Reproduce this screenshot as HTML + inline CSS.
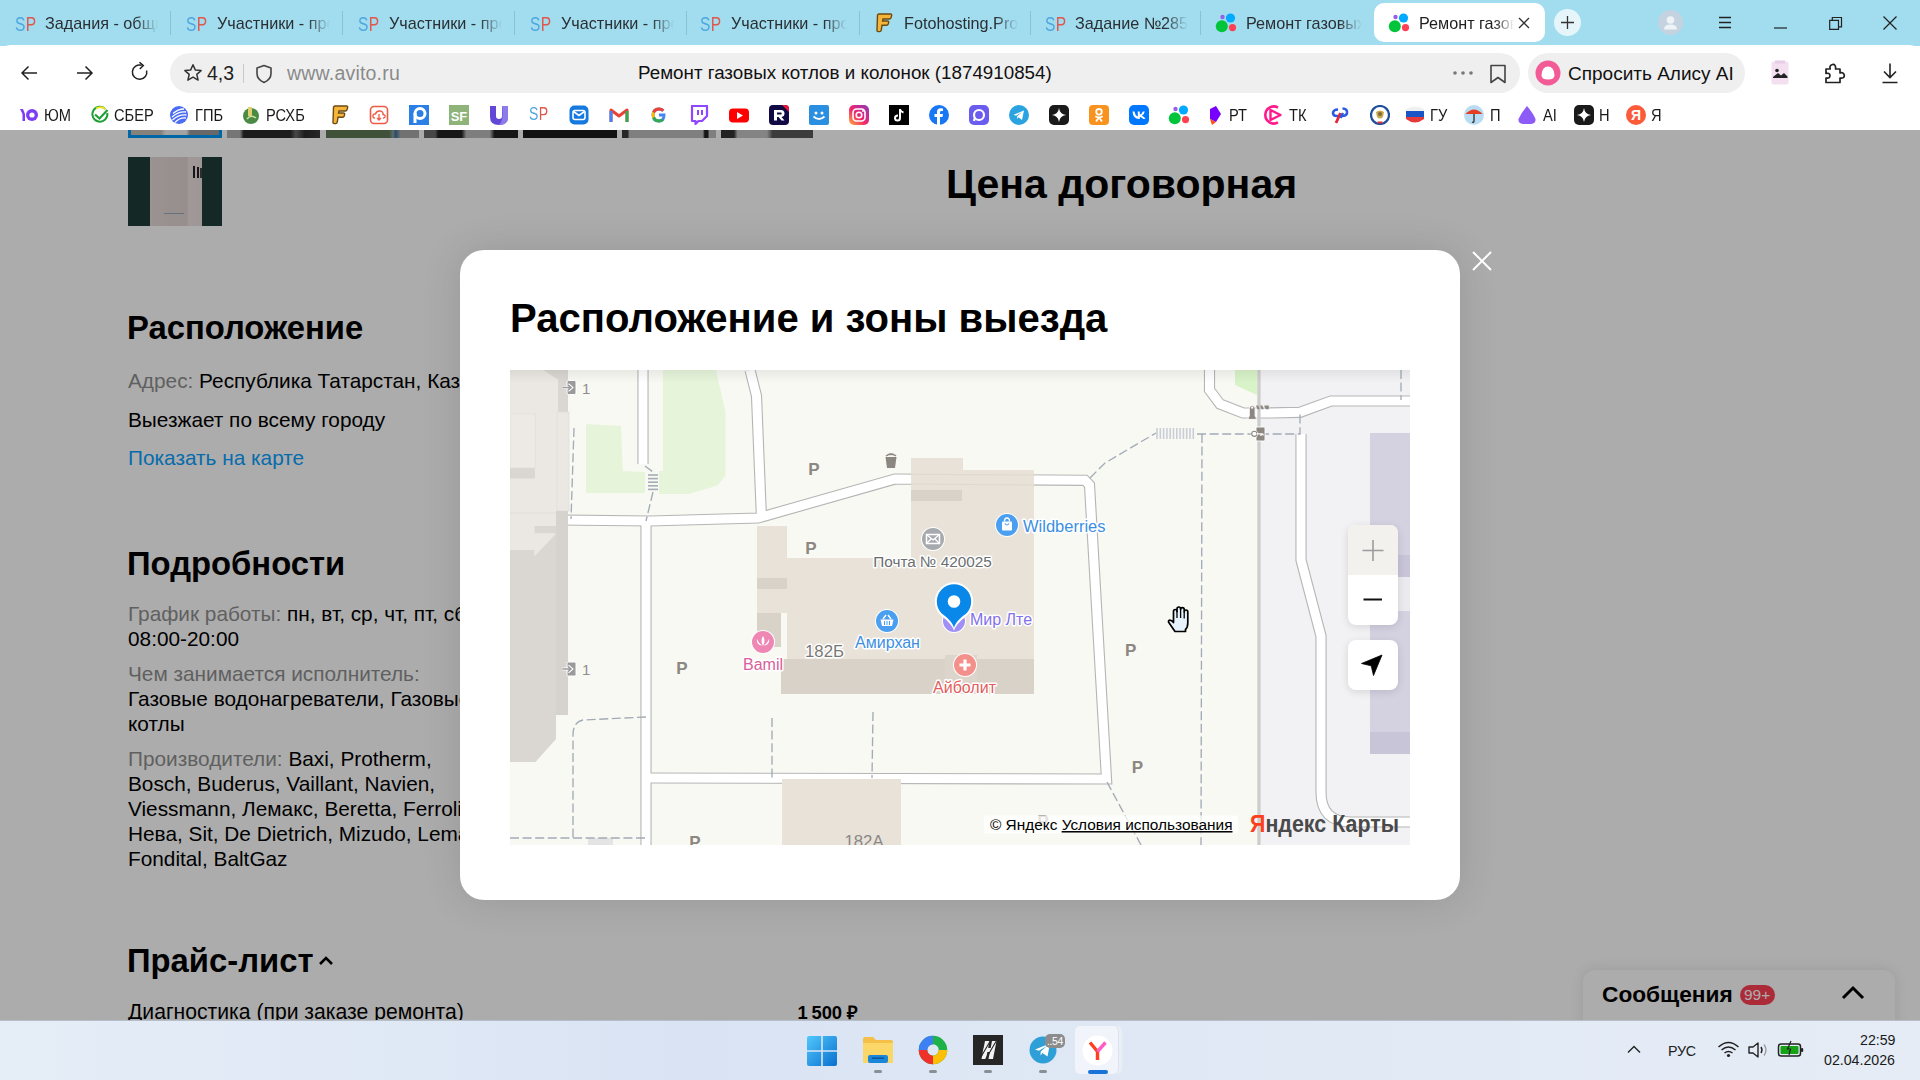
<!DOCTYPE html>
<html><head><meta charset="utf-8">
<style>
*{box-sizing:border-box}
html,body{margin:0;padding:0}
body{width:1920px;height:1080px;overflow:hidden;position:relative;font-family:"Liberation Sans",sans-serif;background:#fff;color:#000}
.a{position:absolute}
.t{position:absolute;white-space:nowrap;line-height:1}
/* tabs */
#tabs{left:0;top:0;width:1920px;height:46px;background:#a1ddef}
.sp{position:absolute;top:12.9px;font-size:21px;letter-spacing:0.5px;line-height:1;transform:scaleX(0.74);transform-origin:0 0}
.sp b{font-weight:400;color:#4fa6e0}
.sp i{font-style:normal;color:#e2564b}
.tx{position:absolute;top:15px;font-size:16.2px;color:#2b2f33;white-space:nowrap;overflow:hidden;line-height:1.1;
 -webkit-mask-image:linear-gradient(90deg,#000 80%,transparent 100%)}
.sep{position:absolute;top:11px;width:1px;height:24px;background:#86c3d6}
#toolbar{left:0;top:45px;width:1920px;height:56px;background:#fff;border-radius:10px 10px 0 0}
#bm{left:0;top:100px;width:1920px;height:30px;background:#fff}
#page{left:0;top:130px;width:1920px;height:890px;background:#fff;overflow:hidden}
#overlay{left:0;top:0;width:1920px;height:890px;background:rgba(0,0,0,0.325)}
#taskbar{left:0;top:1020px;width:1920px;height:60px;background:linear-gradient(90deg,#e5edf7 0%,#dfe8f5 22%,#d9e3f4 36%,#dee7f4 52%,#e2eaf5 75%,#e5ecf6 100%)}
</style></head>
<body>
<!-- TAB STRIP -->
<div id="tabs" class="a">
<div class="sp a" style="left:15px"><b>S</b><i>P</i></div>
<div class="tx" style="left:45px;width:113px">Задания - общие</div>
<div class="sep" style="left:170px"></div>
<div class="sp a" style="left:186px"><b>S</b><i>P</i></div>
<div class="tx" style="left:217px;width:113px">Участники - просмотр</div>
<div class="sep" style="left:342px"></div>
<div class="sp a" style="left:358px"><b>S</b><i>P</i></div>
<div class="tx" style="left:389px;width:113px">Участники - просмотр</div>
<div class="sep" style="left:514px"></div>
<div class="sp a" style="left:530px"><b>S</b><i>P</i></div>
<div class="tx" style="left:561px;width:113px">Участники - просмотр</div>
<div class="sep" style="left:686px"></div>
<div class="sp a" style="left:700px"><b>S</b><i>P</i></div>
<div class="tx" style="left:731px;width:116px">Участники - просмотр</div>
<div class="sep" style="left:859px"></div>
<svg class="a" style="left:875px;top:13px" width="18" height="20" viewBox="0 0 18 20"><path d="M2.5 2.5 Q2.5 1 4 1 L15.5 1 Q17 1 16.6 2.6 L16 4.8 Q15.6 6 14.4 6 L8 6 L7.6 8 L12.5 8 Q14 8 13.6 9.5 L13.2 11 Q12.8 12.3 11.6 12.3 L7 12.3 L6.3 16.8 Q6 18.6 4.5 18.6 L3.2 18.6 Q1.8 18.6 2 17 Z" fill="#f6b53a" stroke="#6b4a12" stroke-width="1.4"/></svg>
<div class="tx" style="left:904px;width:114px">Fotohosting.Pro</div>
<div class="sep" style="left:1030px"></div>
<div class="sp a" style="left:1045px"><b>S</b><i>P</i></div>
<div class="tx" style="left:1075px;width:113px">Задание №2857</div>
<div class="sep" style="left:1200px"></div>
<svg class="a" style="left:1215px;top:12px" width="24" height="22" viewBox="0 0 24 22"><circle cx="7.5" cy="5" r="2.2" fill="#965eeb"/><circle cx="15.5" cy="6" r="4.6" fill="#0af"/><circle cx="6.8" cy="14.3" r="6" fill="#00c53a"/><circle cx="17.5" cy="15.6" r="3.6" fill="#ff4053"/></svg>
<div class="tx" style="left:1246px;width:116px">Ремонт газовых котлов</div>
<div class="a" style="left:1374px;top:3px;width:171px;height:39px;background:#fff;border-radius:10px"></div>
<svg class="a" style="left:1388px;top:12px" width="24" height="22" viewBox="0 0 24 22"><circle cx="7.5" cy="5" r="2.2" fill="#965eeb"/><circle cx="15.5" cy="6" r="4.6" fill="#0af"/><circle cx="6.8" cy="14.3" r="6" fill="#00c53a"/><circle cx="17.5" cy="15.6" r="3.6" fill="#ff4053"/></svg>
<div class="tx" style="left:1419px;width:95px;color:#1f1f1f">Ремонт газовых</div>
<svg class="a" style="left:1517px;top:16px" width="14" height="14" viewBox="0 0 14 14"><path d="M2 2L12 12M12 2L2 12" stroke="#333" stroke-width="1.3"/></svg>
<div class="a" style="left:1554px;top:9px;width:27px;height:27px;border-radius:50%;background:#e6f5fa"></div>
<svg class="a" style="left:1559px;top:14px" width="17" height="17" viewBox="0 0 17 17"><path d="M8.5 2V15M2 8.5H15" stroke="#333" stroke-width="1.3"/></svg>
<div class="a" style="left:1658px;top:10px;width:25px;height:25px;border-radius:50%;background:#c4d3df"></div>
<svg class="a" style="left:1658px;top:10px" width="25" height="25" viewBox="0 0 25 25"><circle cx="12.5" cy="10" r="3.8" fill="#eef3f7"/><path d="M6 19.5Q6 14.5 12.5 14.5Q19 14.5 19 19.5Z" fill="#eef3f7"/></svg>
<svg class="a" style="left:1716px;top:14px" width="18" height="18" viewBox="0 0 18 18"><path d="M3 3.5H15M3 8.5H15M3 13.5H15" stroke="#222" stroke-width="1.3"/></svg>
<svg class="a" style="left:1772px;top:18px" width="18" height="14" viewBox="0 0 18 14"><path d="M2 10H15" stroke="#222" stroke-width="1.2"/></svg>
<svg class="a" style="left:1827px;top:14px" width="18" height="18" viewBox="0 0 18 18"><path d="M2.7 6.3H11.5V15.3H2.7Z M5.3 6.3V3.5H14.5V12.8H11.5" fill="none" stroke="#222" stroke-width="1.2"/></svg>
<svg class="a" style="left:1881px;top:14px" width="18" height="18" viewBox="0 0 18 18"><path d="M2.5 2.5L15.5 15.5M15.5 2.5L2.5 15.5" stroke="#222" stroke-width="1.25"/></svg>
</div>
<!-- TOOLBAR -->
<div id="toolbar" class="a">

<svg class="a" style="left:19px;top:18px" width="20" height="20" viewBox="0 0 20 20"><path d="M18 10H3M9.5 3.5L3 10L9.5 16.5" fill="none" stroke="#222" stroke-width="1.5"/></svg>
<svg class="a" style="left:75px;top:18px" width="20" height="20" viewBox="0 0 20 20"><path d="M2 10H17M10.5 3.5L17 10L10.5 16.5" fill="none" stroke="#222" stroke-width="1.5"/></svg>
<svg class="a" style="left:129px;top:16px" width="22" height="22" viewBox="0 0 22 22"><path d="M17.6 9.5A7.2 7.2 0 1 1 12.6 4.2" fill="none" stroke="#222" stroke-width="1.5"/><path d="M10.5 1.2L14.3 4.6L10.8 8" fill="none" stroke="#222" stroke-width="1.5"/></svg>
<div class="a" style="left:170px;top:8px;width:1350px;height:40px;border-radius:20px;background:#efefef"></div>
<svg class="a" style="left:183px;top:18px" width="20" height="20" viewBox="0 0 20 20"><path d="M10 1.8L12.4 7.1L18.1 7.6L13.8 11.4L15.1 17.1L10 14.1L4.9 17.1L6.2 11.4L1.9 7.6L7.6 7.1Z" fill="none" stroke="#333" stroke-width="1.5" stroke-linejoin="round"/></svg>
<div class="t" style="left:207px;top:19px;font-size:19.5px;color:#1f1f1f">4,3</div>
<div class="a" style="left:243px;top:19px;width:1px;height:19px;background:#c9c9c9"></div>
<svg class="a" style="left:254px;top:19px" width="20" height="20" viewBox="0 0 20 20"><path d="M10 1.5L17 4V9.5Q17 15.5 10 18.5Q3 15.5 3 9.5V4Z" fill="none" stroke="#444" stroke-width="1.6" stroke-linejoin="round"/></svg>
<div class="t" style="left:287px;top:19px;font-size:19.5px;color:#8a8a8a;letter-spacing:0.2px">www.avito.ru</div>
<div class="t" style="left:638px;top:19px;font-size:18.8px;color:#111">Ремонт газовых котлов и колонок (1874910854)</div>
<svg class="a" style="left:1452px;top:23px" width="22" height="10" viewBox="0 0 22 10"><circle cx="3" cy="5" r="1.8" fill="#777"/><circle cx="11" cy="5" r="1.8" fill="#777"/><circle cx="19" cy="5" r="1.8" fill="#777"/></svg>
<svg class="a" style="left:1488px;top:18px" width="20" height="22" viewBox="0 0 20 22"><path d="M3 2.5H17V19.5L10 14.5L3 19.5Z" fill="none" stroke="#444" stroke-width="1.6" stroke-linejoin="round"/></svg>
<div class="a" style="left:1528px;top:8px;width:217px;height:40px;border-radius:20px;background:#efefef"></div>
<svg class="a" style="left:1535px;top:15px" width="26" height="26" viewBox="0 0 26 26"><circle cx="13" cy="13" r="12.5" fill="#f25b96"/><path d="M13 6.5Q7 6.5 6.5 15Q6.5 19.5 13 19.5Q19.5 19.5 19.5 15Q19 6.5 13 6.5Z" fill="#fff"/></svg>
<div class="t" style="left:1568px;top:19px;font-size:19px;color:#111">Спросить Алису AI</div>
<svg class="a" style="left:1770px;top:15px" width="20" height="26" viewBox="0 0 20 26"><rect x="1.5" y="1.5" width="17" height="23" rx="2" fill="#f3dff0"/><rect x="5" y="0.5" width="10" height="3" fill="#e8cde6"/><circle cx="7" cy="10.5" r="1.8" fill="#222"/><path d="M3 17L8 13L11 15.5L14 13L17.5 16.5V18H3Z" fill="#222"/></svg>
<svg class="a" style="left:1822px;top:16px" width="26" height="24" viewBox="0 0 26 24"><path d="M4 8H8.2Q7 4.5 10.5 3.5Q14 3 13.6 8H18V12Q21.5 10.8 22.3 14.2Q22.5 17.7 18 17V21.5H4V17Q8 17.8 8 14.6Q7.6 11.5 4 12.5Z" fill="none" stroke="#222" stroke-width="1.7" stroke-linejoin="round"/></svg>
<svg class="a" style="left:1880px;top:17px" width="20" height="22" viewBox="0 0 20 22"><path d="M10 1.5V15.5M4 9.5L10 15.5L16 9.5M2.5 20.5H17.5" fill="none" stroke="#222" stroke-width="1.6"/></svg>
</div>
<!-- BOOKMARKS -->
<div id="bm" class="a">
<svg class="a" style="left:18px;top:5px" width="20" height="20" viewBox="0 0 20 20"><path d="M2 4L5 4L7 9L7 16L4.5 16L4.5 9Z" fill="#7d3cf5"/><circle cx="14" cy="10" r="6" fill="#7d3cf5"/><circle cx="14" cy="10" r="2.6" fill="#fff"/></svg>
<div class="t" style="left:44px;top:7.2px;font-size:16.3px;color:#1a1a1a;transform:scaleX(0.9);transform-origin:0 0">ЮМ</div>
<svg class="a" style="left:90px;top:5px" width="20" height="20" viewBox="0 0 20 20"><path d="M15.5 4.2A7.5 7.5 0 1 0 17.3 8" fill="none" stroke="#21a038" stroke-width="2"/><path d="M15.5 4.2A7.5 7.5 0 0 0 6 3.6" fill="none" stroke="#f2e51f" stroke-width="2"/><path d="M5 9.5L9.5 13.5L17.5 5" fill="none" stroke="#21a038" stroke-width="2.2"/></svg>
<div class="t" style="left:114px;top:7.2px;font-size:16.3px;color:#1a1a1a;transform:scaleX(0.9);transform-origin:0 0">СБЕР</div>
<svg class="a" style="left:169px;top:5px" width="20" height="20" viewBox="0 0 20 20"><circle cx="10" cy="10" r="9" fill="#4a6cf0"/><path d="M3 12Q10 6 17 7M3.5 15Q10 9 17.5 10M6 17.5Q11 12 17 13M4 8.5Q9 4 15 4" stroke="#fff" stroke-width="1.3" fill="none"/></svg>
<div class="t" style="left:195px;top:7.2px;font-size:16.3px;color:#1a1a1a;transform:scaleX(0.9);transform-origin:0 0">ГПБ</div>
<svg class="a" style="left:242px;top:5px" width="18" height="20" viewBox="0 0 18 20"><circle cx="9" cy="11" r="8" fill="#4a8a45"/><path d="M5 14Q9 9 14 13" stroke="#cde2a0" stroke-width="1.5" fill="none"/><rect x="6" y="2" width="4" height="9" fill="#e0d070"/></svg>
<div class="t" style="left:266px;top:7.2px;font-size:16.3px;color:#1a1a1a;transform:scaleX(0.9);transform-origin:0 0">РСХБ</div>
<svg class="a" style="left:331px;top:5px" width="18" height="20" viewBox="0 0 18 20"><path d="M2.5 2.5 Q2.5 1 4 1 L15.5 1 Q17 1 16.6 2.6 L16 4.8 Q15.6 6 14.4 6 L8 6 L7.6 8 L12.5 8 Q14 8 13.6 9.5 L13.2 11 Q12.8 12.3 11.6 12.3 L7 12.3 L6.3 16.8 Q6 18.6 4.5 18.6 L3.2 18.6 Q1.8 18.6 2 17 Z" fill="#f6b53a" stroke="#6b4a12" stroke-width="1.4"/></svg>
<svg class="a" style="left:369px;top:5px" width="20" height="20" viewBox="0 0 20 20"><rect x="1.5" y="1.5" width="17" height="17" rx="3.5" fill="#fff" stroke="#ee5a45" stroke-width="1.6"/><path d="M6 13Q3.5 13 4 10.5Q4.5 8.5 6.5 9Q7.5 5.5 11 6Q14.5 6.5 14 9.5Q16.5 10 16 12Q15.5 13 14 13" fill="none" stroke="#ee5a45" stroke-width="1.4"/><path d="M10 9V15M8 13L10 15L12 13" fill="none" stroke="#ee5a45" stroke-width="1.3"/></svg>
<svg class="a" style="left:409px;top:5px" width="20" height="20" viewBox="0 0 20 20"><rect x="0" y="0" width="20" height="20" fill="#2c80e5"/><circle cx="11" cy="8.5" r="5" fill="none" stroke="#fff" stroke-width="3"/><rect x="4.5" y="8" width="3" height="10" fill="#fff"/></svg>
<svg class="a" style="left:449px;top:5px" width="20" height="20" viewBox="0 0 20 20"><rect x="0" y="0" width="20" height="20" fill="#8fb47a"/><text x="10" y="15.5" font-size="13" font-weight="700" text-anchor="middle" fill="#fff" font-family="Liberation Sans">SF</text></svg>
<svg class="a" style="left:489px;top:5px" width="20" height="20" viewBox="0 0 20 20"><path d="M1 1H7V11Q7 14 10 14Q13 14 13 11V1H19V12Q19 20 10 20Q1 20 1 12Z" fill="#6348d8"/><path d="M13 1H19V12Q19 20 10 20Q15 16 13 1Z" fill="#8d7bea"/></svg>
<div class="sp a" style="left:529px;top:4px;font-size:19px"><b>S</b><i>P</i></div>
<svg class="a" style="left:569px;top:5px" width="20" height="20" viewBox="0 0 20 20"><rect x="0.5" y="0.5" width="19" height="19" rx="5" fill="#1679e0"/><rect x="4" y="5.5" width="12" height="9" rx="2" fill="none" stroke="#fff" stroke-width="1.6"/><path d="M4.5 6.5L10 10.5L15.5 6.5" fill="none" stroke="#fff" stroke-width="1.6"/></svg>
<svg class="a" style="left:609px;top:5px" width="20" height="20" viewBox="0 0 20 20"><path d="M2 17V5L10 11L18 5V17" fill="none" stroke="#ea4335" stroke-width="3" stroke-linejoin="round"/><path d="M2 17V6" stroke="#4285f4" stroke-width="3"/><path d="M18 17V6" stroke="#34a853" stroke-width="3"/></svg>
<svg class="a" style="left:649px;top:5px" width="20" height="20" viewBox="0 0 20 20"><path d="M16.5 8.5H10V11.5H13.5Q13 14.5 10 14.5Q6 14.5 5.5 10Q6 5.5 10 5.5Q12 5.5 13.2 6.8L15.3 4.7Q13.2 2.5 10 2.5Q3 2.5 2.5 10Q3 17.5 10 17.5Q17 17.5 16.5 8.5Z" fill="#4285f4"/><path d="M3.2 6.5L5.8 8.2Q6.8 5.5 10 5.5Q12 5.5 13.2 6.8L15.3 4.7Q13.2 2.5 10 2.5Q5 2.5 3.2 6.5Z" fill="#ea4335"/><path d="M3.2 6.5Q2 9.5 3.2 13.5L5.8 11.7Q5.2 10 5.8 8.2Z" fill="#fbbc05"/><path d="M3.2 13.5Q5 17.5 10 17.5Q13 17.5 15 15.6L12.6 13.7Q11.5 14.5 10 14.5Q7 14.5 5.8 11.7Z" fill="#34a853"/></svg>
<svg class="a" style="left:689px;top:5px" width="20" height="20" viewBox="0 0 20 20"><path d="M3 1H18V11L13 16H9.5L6.5 19V16H3Z" fill="none" stroke="#9146ff" stroke-width="2.2" stroke-linejoin="round"/><path d="M9 5V10M13 5V10" stroke="#9146ff" stroke-width="2"/></svg>
<svg class="a" style="left:729px;top:5px" width="20" height="20" viewBox="0 0 20 20"><rect x="0" y="3.5" width="20" height="14" rx="4" fill="#f00"/><path d="M8 7V14L14 10.5Z" fill="#fff"/></svg>
<svg class="a" style="left:769px;top:5px" width="20" height="20" viewBox="0 0 20 20"><rect x="0" y="0" width="20" height="20" rx="4" fill="#100943"/><path d="M13 0H16Q20 0 20 4V7Z" fill="#ed143b"/><path d="M5 5H12Q15.5 5 15.5 8.5Q15.5 11.5 12.5 12L15.5 15.5H12.5L9.5 12H8V15.5H5ZM8 7.5V9.5H12Q12.7 9.5 12.7 8.5Q12.7 7.5 12 7.5Z" fill="#fff"/></svg>
<svg class="a" style="left:809px;top:5px" width="20" height="20" viewBox="0 0 20 20"><rect x="0" y="0" width="20" height="20" rx="2" fill="#2a8fe0"/><circle cx="7" cy="8" r="1.5" fill="#fff"/><circle cx="13" cy="8" r="1.5" fill="#fff"/><path d="M4.5 11.5Q10 16.5 15.5 11.5" fill="none" stroke="#fff" stroke-width="1.8"/></svg>
<div class="a" style="left:849px;top:105px;"></div>
<svg class="a" style="left:849px;top:5px" width="20" height="20" viewBox="0 0 20 20"><defs><linearGradient id="ig" x1="0" y1="1" x2="1" y2="0"><stop offset="0" stop-color="#fdb13b"/><stop offset="0.45" stop-color="#f2256e"/><stop offset="1" stop-color="#8a3ab9"/></linearGradient></defs><rect x="0" y="0" width="20" height="20" rx="5" fill="url(#ig)"/><rect x="4" y="4" width="12" height="12" rx="3.5" fill="none" stroke="#fff" stroke-width="1.6"/><circle cx="10" cy="10" r="2.8" fill="none" stroke="#fff" stroke-width="1.6"/><circle cx="14" cy="6" r="0.9" fill="#fff"/></svg>
<svg class="a" style="left:889px;top:5px" width="20" height="20" viewBox="0 0 20 20"><rect x="0" y="0" width="20" height="20" fill="#000"/><path d="M11 4V13Q11 15.5 8.5 15.5Q6 15.5 6 13Q6 10.5 9 10.5" fill="none" stroke="#fff" stroke-width="2"/><path d="M11 4.5Q12 7 14.5 7.5" fill="none" stroke="#fff" stroke-width="2"/></svg>
<svg class="a" style="left:929px;top:5px" width="20" height="20" viewBox="0 0 20 20"><circle cx="10" cy="10" r="10" fill="#1877f2"/><path d="M11 20V12H13.5L14 9H11V7.3Q11 6 12.3 6H14V3.5Q12.8 3.3 11.8 3.3Q8 3.3 8 7V9H5.5V12H8V20Z" fill="#fff"/></svg>
<svg class="a" style="left:969px;top:5px" width="20" height="20" viewBox="0 0 20 20"><rect x="0" y="0" width="20" height="20" rx="5" fill="#6b5cf0"/><circle cx="10" cy="10" r="5" fill="none" stroke="#fff" stroke-width="2.2"/><path d="M5 16L6 12" stroke="#fff" stroke-width="2.2"/></svg>
<svg class="a" style="left:1009px;top:5px" width="20" height="20" viewBox="0 0 20 20"><circle cx="10" cy="10" r="10" fill="#2aa3e0"/><path d="M4.5 9.8L15 5.5L13 15L9.5 12.3L8 14L8.2 11.3L13 7L7 10.8Z" fill="#fff"/></svg>
<svg class="a" style="left:1049px;top:5px" width="20" height="20" viewBox="0 0 20 20"><rect x="0" y="0" width="20" height="20" rx="5" fill="#1a1a1a"/><path d="M10 3Q10.8 9.2 17 10Q10.8 10.8 10 17Q9.2 10.8 3 10Q9.2 9.2 10 3Z" fill="#fff"/></svg>
<svg class="a" style="left:1089px;top:5px" width="20" height="20" viewBox="0 0 20 20"><rect x="0" y="0" width="20" height="20" rx="4" fill="#f7931e"/><circle cx="10" cy="6.8" r="2.8" fill="none" stroke="#fff" stroke-width="1.8"/><path d="M6.3 11.3Q10 13.5 13.7 11.3M10 12.5L7 16.5M10 12.5L13 16.5" fill="none" stroke="#fff" stroke-width="1.8"/></svg>
<svg class="a" style="left:1129px;top:5px" width="20" height="20" viewBox="0 0 20 20"><rect x="0" y="0" width="20" height="20" rx="5" fill="#0077ff"/><path d="M3.5 6.5H5.5Q6.5 11 8.8 11.5V6.5H10.8V9.5Q12.8 9.3 13.8 6.5H15.8Q15.2 9.5 12.8 10.8Q15.4 11.8 16.5 14H14.3Q13.3 12.3 10.8 12V14H10.2Q4 14 3.5 6.5Z" fill="#fff"/></svg>
<svg class="a" style="left:1168px;top:4px" width="24" height="22" viewBox="0 0 24 22"><circle cx="7.5" cy="5" r="2.2" fill="#965eeb"/><circle cx="15.5" cy="6" r="4.6" fill="#0af"/><circle cx="6.8" cy="14.3" r="6" fill="#00c53a"/><circle cx="17.5" cy="15.6" r="3.6" fill="#ff4053"/></svg>
<svg class="a" style="left:1208px;top:5px" width="14" height="20" viewBox="0 0 14 20"><path d="M2 4L8 1L13 9L8 17L2 14Z" fill="#7700ff"/><path d="M2 14L8 17L4 20Z" fill="#ff4f12"/></svg>
<div class="t" style="left:1229px;top:7.2px;font-size:16.3px;color:#1a1a1a;transform:scaleX(0.9);transform-origin:0 0">РТ</div>
<svg class="a" style="left:1264px;top:5px" width="20" height="20" viewBox="0 0 20 20"><path d="M14 2.6A8.5 8.5 0 1 0 14 17.4" fill="none" stroke="#ff1a8c" stroke-width="2.6"/><path d="M6.5 5L16.5 10L6.5 15Z" fill="none" stroke="#ff1a8c" stroke-width="2.4" stroke-linejoin="round"/></svg>
<div class="t" style="left:1289px;top:7.2px;font-size:16.3px;color:#1a1a1a;transform:scaleX(0.9);transform-origin:0 0">ТК</div>
<svg class="a" style="left:1330px;top:5px" width="20" height="20" viewBox="0 0 20 20"><path d="M12.5 3.5Q17.5 3.5 17 8Q16.5 11 12 11H6.5Q3 11 3 8Q3.5 4.5 8 4.5" fill="none" stroke="#2a5ae0" stroke-width="2.6"/><path d="M10.5 8L6 18" stroke="#e52535" stroke-width="2.8"/><path d="M13 8L10.5 13" stroke="#2a5ae0" stroke-width="2.4"/></svg>
<svg class="a" style="left:1370px;top:5px" width="20" height="20" viewBox="0 0 20 20"><circle cx="10" cy="10" r="9" fill="#fff" stroke="#1d4f9c" stroke-width="2.2"/><path d="M6 7Q10 4 14 7L13 12Q10 15 7 12Z" fill="#c9a94d"/><circle cx="10" cy="9" r="2" fill="#7a6a3a"/><rect x="7.5" y="16.5" width="5" height="2" fill="#d33"/></svg>
<svg class="a" style="left:1405px;top:5px" width="20" height="20" viewBox="0 0 20 20"><path d="M1 4Q10 -1 19 4V6H1Z" fill="#f0f0f0"/><rect x="1" y="6" width="18" height="6" fill="#1a55c5"/><path d="M1 12H19V14Q10 21 1 14Z" fill="#e63a3a"/></svg>
<div class="t" style="left:1430px;top:7.2px;font-size:16.3px;color:#1a1a1a;transform:scaleX(0.9);transform-origin:0 0">ГУ</div>
<svg class="a" style="left:1464px;top:5px" width="20" height="20" viewBox="0 0 20 20"><circle cx="10" cy="10" r="10" fill="#b9dcf3"/><path d="M1.5 9Q10 0 18.5 9Z" fill="#e53c25"/><path d="M10 9V16Q10 18 8 17" fill="none" stroke="#222" stroke-width="1.2"/></svg>
<div class="t" style="left:1490px;top:7.2px;font-size:16.3px;color:#1a1a1a;transform:scaleX(0.9);transform-origin:0 0">П</div>
<svg class="a" style="left:1517px;top:5px" width="20" height="20" viewBox="0 0 20 20"><path d="M10 1Q4 8 1.5 14Q1 19 6 19H14Q19 19 18.5 14Q16 8 10 1Z" fill="#8d5cf7"/></svg>
<div class="t" style="left:1543px;top:7.2px;font-size:16.3px;color:#1a1a1a;transform:scaleX(0.9);transform-origin:0 0">AI</div>
<svg class="a" style="left:1574px;top:5px" width="20" height="20" viewBox="0 0 20 20"><rect x="0" y="0" width="20" height="20" rx="5" fill="#1a1a1a"/><path d="M10 3Q10.8 9.2 17 10Q10.8 10.8 10 17Q9.2 10.8 3 10Q9.2 9.2 10 3Z" fill="#fff"/></svg>
<div class="t" style="left:1599px;top:7.2px;font-size:16.3px;color:#1a1a1a;transform:scaleX(0.9);transform-origin:0 0">Н</div>
<svg class="a" style="left:1626px;top:5px" width="20" height="20" viewBox="0 0 20 20"><circle cx="10" cy="10" r="10" fill="#fc5b3a"/><text x="10" y="15" font-size="14" font-weight="700" text-anchor="middle" fill="#fff" font-family="Liberation Sans">Я</text></svg>
<div class="t" style="left:1651px;top:7.2px;font-size:16.3px;color:#1a1a1a;transform:scaleX(0.9);transform-origin:0 0">Я</div>
</div>
<!-- PAGE -->
<div id="page" class="a">
  <div id="content" class="a" style="left:0;top:0;width:1920px;height:890px">
<div class="a" style="left:128px;top:-20px;width:94px;height:28px;background:linear-gradient(90deg,#c8c0b8 0 35%,#f2f2f2 40% 62%,#9a9a9a 66% 100%)"></div>
<div class="a" style="left:227px;top:-20px;width:93px;height:28px;background:linear-gradient(90deg,#b0b0b0 0 14%,#2a2a2a 18% 68%,#6a6a6a 74%,#2a2a2a 84%,#3a3a3a 100%)"></div>
<div class="a" style="left:326px;top:-20px;width:93px;height:28px;background:linear-gradient(90deg,#5e7a55 0 68%,#8aa0a0 72%,#3a70a0 75%,#a8a8a8 80% 100%)"></div>
<div class="a" style="left:424px;top:-20px;width:94px;height:28px;background:linear-gradient(90deg,#6a6a6a 0 12%,#222 15% 40%,#bbb 45% 70%,#222 75% 100%)"></div>
<div class="a" style="left:523px;top:-20px;width:94px;height:28px;background:linear-gradient(90deg,#1c1c1c 0 100%)"></div>
<div class="a" style="left:622px;top:-20px;width:94px;height:28px;background:linear-gradient(90deg,#3a3a3a 0 6%,#bcbcbc 8% 86%,#222 88% 91%,#bcbcbc 93% 100%)"></div>
<div class="a" style="left:721px;top:-20px;width:92px;height:28px;background:linear-gradient(90deg,#333 0 14%,#c4c4c4 18% 50%,#5a5a5a 56% 100%)"></div>
<div class="a" style="left:128px;top:-20px;width:94px;height:28px;border:3px solid #0099f7;border-top:0"></div>
<div class="a" style="left:128px;top:27px;width:94px;height:69px;background:#1e3c37"></div>
<div class="a" style="left:150px;top:27px;width:52px;height:69px;background:linear-gradient(90deg,#e6d9d9,#e0d2d2 70%,#eee2e3 75%,#ebdedf)"></div>
<div class="a" style="left:193px;top:36px;width:2px;height:12px;background:#222"></div><div class="a" style="left:196.5px;top:37px;width:2px;height:11px;background:#222"></div><div class="a" style="left:199.5px;top:38px;width:2px;height:10px;background:#444"></div>
<div class="a" style="left:164px;top:83px;width:20px;height:1px;background:#9ab"></div>
<div class="t" style="left:946px;top:34px;font-size:41px;font-weight:700;color:#000;">Цена договорная</div>
<div class="t" style="left:127px;top:182px;font-size:32.8px;font-weight:700;color:#000;">Расположение</div>
<div class="t" style="left:128px;top:241px;font-size:20.8px;font-weight:400;color:#000;"><span style="color:#8f8f8f">Адрес:</span> Республика Татарстан, Казань, ул. Амирхана, 182Б</div>
<div class="t" style="left:128px;top:280px;font-size:20.8px;font-weight:400;color:#000;">Выезжает по всему городу</div>
<div class="t" style="left:128px;top:318px;font-size:20.8px;font-weight:400;color:#0aa0ff;">Показать на карте</div>
<div class="t" style="left:127px;top:418px;font-size:32.8px;font-weight:700;color:#000;">Подробности</div>
<div class="t" style="left:128px;top:474px;font-size:20.8px;font-weight:400;color:#000;"><span style="color:#8f8f8f">График работы:</span> пн, вт, ср, чт, пт, сб, вс</div>
<div class="t" style="left:128px;top:499px;font-size:20.8px;font-weight:400;color:#000;">08:00-20:00</div>
<div class="t" style="left:128px;top:534px;font-size:20.8px;font-weight:400;color:#8f8f8f;">Чем занимается исполнитель:</div>
<div class="t" style="left:128px;top:559px;font-size:20.8px;font-weight:400;color:#000;">Газовые водонагреватели, Газовые</div>
<div class="t" style="left:128px;top:584px;font-size:20.8px;font-weight:400;color:#000;">котлы</div>
<div class="t" style="left:128px;top:619px;font-size:20.8px;font-weight:400;color:#000;"><span style="color:#8f8f8f">Производители:</span> Baxi, Protherm,</div>
<div class="t" style="left:128px;top:644px;font-size:20.8px;font-weight:400;color:#000;">Bosch, Buderus, Vaillant, Navien,</div>
<div class="t" style="left:128px;top:669px;font-size:20.8px;font-weight:400;color:#000;">Viessmann, Лемакс, Beretta, Ferroli,</div>
<div class="t" style="left:128px;top:694px;font-size:20.8px;font-weight:400;color:#000;">Нева, Sit, De Dietrich, Mizudo, Lemax,</div>
<div class="t" style="left:128px;top:719px;font-size:20.8px;font-weight:400;color:#000;">Fondital, BaltGaz</div>
<div class="t" style="left:127px;top:815px;font-size:32.8px;font-weight:700;color:#000;">Прайс-лист</div>
<svg class="a" style="left:317px;top:824px" width="18" height="14" viewBox="0 0 18 14"><path d="M3 10L9 4L15 10" fill="none" stroke="#000" stroke-width="2.6"/></svg>
<div class="t" style="left:128px;top:871px;font-size:21.15px;font-weight:400;color:#000;">Диагностика (при заказе ремонта)</div>
<div class="t" style="left:797.5px;top:874px;font-size:18.4px;font-weight:700;color:#000;">1&#8239;500 ₽</div>
<div class="a" style="left:1583px;top:840px;width:312px;height:70px;background:#fff;border-radius:12px;box-shadow:0 0 14px rgba(0,0,0,0.10)"></div>
<div class="t" style="left:1602px;top:853px;font-size:22.7px;font-weight:700;color:#000;">Сообщения</div>
<div class="a" style="left:1740px;top:855px;width:35px;height:20px;border-radius:10px;background:#ff4053"></div>
<div class="t" style="left:1744px;top:857px;font-size:15.5px;font-weight:400;color:#fff;">99+</div>
<svg class="a" style="left:1840px;top:854px" width="26" height="18" viewBox="0 0 26 18"><path d="M3 14L13 4L23 14" fill="none" stroke="#000" stroke-width="3"/></svg>
  </div>
  <div id="overlay" class="a"></div>
  <div id="modal" class="a" style="left:460px;top:120px;width:1000px;height:650px;background:#fff;border-radius:24px;box-shadow:0 0 40px rgba(0,0,0,0.12)">

<div class="t" style="left:50px;top:48.3px;font-size:40.1px;font-weight:700;color:#000">Расположение и зоны выезда</div>
<svg class="a" style="left:50px;top:120px" width="900" height="475" viewBox="510 370 900 475"><rect x="510" y="370" width="900" height="475" fill="#f9f9f4" />
<rect x="1259" y="370" width="151" height="475" fill="#f2f2f5" />
<polygon points="586,424 621,426 623,471 645,472 645,493 586,493" fill="#e6f5da" />
<polygon points="663,370 716,370 725.5,412 725.5,476 717,485.7 689,494 659,494 659,471 663,471" fill="#e6f5da" />
<polygon points="1235,370 1257,370 1257,395 1235,385" fill="#d8f3c8" />
<path d="M505,519.4 L650,521 L758,518 L895,479 L1085,480.3 L1089.5,485 L1106.5,779 L646,778" stroke="#b5b5b5" stroke-width="11.2" fill="none" stroke-linejoin="miter"/>
<path d="M646,519 L646,850" stroke="#b5b5b5" stroke-width="11.2" fill="none" stroke-linejoin="miter"/>
<path d="M643,370 L643,464" stroke="#b5b5b5" stroke-width="11.2" fill="none" stroke-linejoin="miter"/>
<path d="M750,370 L756.5,396 L761.5,519" stroke="#b5b5b5" stroke-width="11.2" fill="none" stroke-linejoin="miter"/>
<path d="M1209.5,370 L1209.5,390 L1220,404 L1243,413 L1267,413 L1300,412.3 L1331,401 L1415,401" stroke="#b5b5b5" stroke-width="11.2" fill="none" stroke-linejoin="miter"/>
<path d="M1301,434 L1301,560 L1321,636 L1321,792 Q1321,822 1351,822 L1415,822" stroke="#b5b5b5" stroke-width="11.2" fill="none" stroke-linejoin="miter"/>
<path d="M505,519.4 L650,521 L758,518 L895,479 L1085,480.3 L1089.5,485 L1106.5,779 L646,778" stroke="#fff" stroke-width="9" fill="none" stroke-linejoin="miter"/>
<path d="M646,519 L646,850" stroke="#fff" stroke-width="9" fill="none" stroke-linejoin="miter"/>
<path d="M643,370 L643,464" stroke="#fff" stroke-width="9" fill="none" stroke-linejoin="miter"/>
<path d="M750,370 L756.5,396 L761.5,519" stroke="#fff" stroke-width="9" fill="none" stroke-linejoin="miter"/>
<path d="M1209.5,370 L1209.5,390 L1220,404 L1243,413 L1267,413 L1300,412.3 L1331,401 L1415,401" stroke="#fff" stroke-width="9" fill="none" stroke-linejoin="miter"/>
<path d="M1301,434 L1301,560 L1321,636 L1321,792 Q1321,822 1351,822 L1415,822" stroke="#fff" stroke-width="9" fill="none" stroke-linejoin="miter"/>
<rect x="510" y="370" width="58" height="157" fill="#ebe8e3" />
<polygon points="543,370 559,370 559,380" fill="#dad6d1" />
<rect x="558" y="370" width="10" height="42" fill="#dad6d1" />
<rect x="557" y="412" width="12" height="99" fill="#ebe8e3" stroke="#e0dcd7" stroke-width="0.8"/>
<rect x="510" y="414" width="25.5" height="54" fill="#edeae6" stroke="#e3dfda" stroke-width="0.8"/>
<rect x="510" y="468" width="25" height="10.5" fill="#dad6d1" />
<path d="M510,513 L557,513 M510,522.4 L557,522.4" stroke="#dedad5" stroke-width="0.8"/>
<rect x="510" y="522" width="47" height="34" fill="#ebe8e3" />
<rect x="534.6" y="526" width="21.399999999999977" height="7.5" fill="#dad6d1" />
<polygon points="510,550 534.6,550 534.6,556 556,533.5 556,739 535.5,762 510,762" fill="#dad6d1" />
<rect x="556" y="511" width="12" height="204" fill="#d6d2cd" />
<polygon points="534.6,533.5 556,533.5 534.6,556" fill="#ebe8e3" />
<rect x="911" y="458" width="52" height="12" fill="#e8e2d9" />
<rect x="911" y="470" width="123" height="189" fill="#e8e2d9" />
<rect x="787" y="558" width="124" height="101" fill="#e8e2d9" />
<rect x="757" y="526" width="30" height="87" fill="#e8e2d9" />
<rect x="757" y="578" width="30" height="11" fill="#d9d2c9" />
<rect x="757" y="613" width="24" height="34" fill="#d9d2c9" />
<rect x="781" y="659" width="253" height="35" fill="#d9d2c9" />
<rect x="945" y="655" width="32" height="39" fill="#dcd5cc" />
<rect x="911" y="490" width="51" height="11" fill="#d9d2c9" />
<path d="M911,474.3 L1034,475 M911,484 L1034,485" stroke="#dcd5cc" stroke-width="0.8"/>
<rect x="782" y="779" width="119" height="71" fill="#e8e2d9" />
<rect x="588" y="838" width="25" height="12" fill="#e4e4e4" />
<rect x="1370" y="433" width="40" height="122" fill="#d4d2e1" />
<rect x="1370" y="555" width="40" height="22" fill="#c8c5d9" />
<rect x="1370" y="577" width="40" height="34" fill="#ebebef" />
<rect x="1370" y="611" width="40" height="121" fill="#d4d2e1" />
<rect x="1370" y="732" width="40" height="22" fill="#c8c5d9" />
<rect x="1257.3" y="370" width="3.2999999999999545" height="475" fill="#cdcdcd" />
<path d="M574,428 L571,519" stroke="#a3abb6" stroke-width="1.35" fill="none" stroke-dasharray="9 3.6"/>
<path d="M645,466 L653,472" stroke="#a3abb6" stroke-width="1.35" fill="none" stroke-dasharray="9 3.6"/>
<path d="M653,492 L646,521" stroke="#a3abb6" stroke-width="1.35" fill="none" stroke-dasharray="9 3.6"/>
<path d="M646,717 L583,720 Q573,722 573,735 L573,838" stroke="#a3abb6" stroke-width="1.35" fill="none" stroke-dasharray="9 3.6"/>
<path d="M510,838 L646,838" stroke="#a3abb6" stroke-width="1.35" fill="none" stroke-dasharray="9 3.6"/>
<path d="M772,718 L772,778" stroke="#a3abb6" stroke-width="1.35" fill="none" stroke-dasharray="9 3.6"/>
<path d="M873,712 L872,778" stroke="#a3abb6" stroke-width="1.35" fill="none" stroke-dasharray="9 3.6"/>
<path d="M1090,478 L1105,463 L1144,440 L1156,433" stroke="#a3abb6" stroke-width="1.35" fill="none" stroke-dasharray="9 3.6"/>
<path d="M1197,434 L1300,434 L1300,412" stroke="#a3abb6" stroke-width="1.35" fill="none" stroke-dasharray="9 3.6"/>
<path d="M1202,434 L1201,845" stroke="#a3abb6" stroke-width="1.35" fill="none" stroke-dasharray="9 3.6"/>
<path d="M1401,370 L1401,400" stroke="#a3abb6" stroke-width="1.35" fill="none" stroke-dasharray="9 3.6"/>
<path d="M1107,782 L1141,845" stroke="#a3abb6" stroke-width="1.35" fill="none" stroke-dasharray="9 3.6"/>
<path d="M648,475.0 L658,475.0" stroke="#a3abb6" stroke-width="1.6"/>
<path d="M648,478.6 L658,478.6" stroke="#a3abb6" stroke-width="1.6"/>
<path d="M648,482.2 L658,482.2" stroke="#a3abb6" stroke-width="1.6"/>
<path d="M648,485.8 L658,485.8" stroke="#a3abb6" stroke-width="1.6"/>
<path d="M648,489.4 L658,489.4" stroke="#a3abb6" stroke-width="1.6"/>
<path d="M1157.0,428 L1157.0,439" stroke="#c9ced6" stroke-width="1.6"/>
<path d="M1160.3,428 L1160.3,439" stroke="#c9ced6" stroke-width="1.6"/>
<path d="M1163.6,428 L1163.6,439" stroke="#c9ced6" stroke-width="1.6"/>
<path d="M1166.9,428 L1166.9,439" stroke="#c9ced6" stroke-width="1.6"/>
<path d="M1170.2,428 L1170.2,439" stroke="#c9ced6" stroke-width="1.6"/>
<path d="M1173.5,428 L1173.5,439" stroke="#c9ced6" stroke-width="1.6"/>
<path d="M1176.8,428 L1176.8,439" stroke="#c9ced6" stroke-width="1.6"/>
<path d="M1180.1,428 L1180.1,439" stroke="#c9ced6" stroke-width="1.6"/>
<path d="M1183.4,428 L1183.4,439" stroke="#c9ced6" stroke-width="1.6"/>
<path d="M1186.7,428 L1186.7,439" stroke="#c9ced6" stroke-width="1.6"/>
<path d="M1190.0,428 L1190.0,439" stroke="#c9ced6" stroke-width="1.6"/>
<path d="M1193.3,428 L1193.3,439" stroke="#c9ced6" stroke-width="1.6"/>
<text x="814" y="474.7" font-family="Liberation Sans" font-size="17" font-weight="700" fill="#8c8781" text-anchor="middle"  >P</text>
<text x="811" y="554" font-family="Liberation Sans" font-size="17" font-weight="700" fill="#8c8781" text-anchor="middle"  >P</text>
<text x="682" y="674" font-family="Liberation Sans" font-size="17" font-weight="700" fill="#8c8781" text-anchor="middle"  >P</text>
<text x="1130.6" y="656" font-family="Liberation Sans" font-size="17" font-weight="700" fill="#8c8781" text-anchor="middle"  >P</text>
<text x="1137.5" y="772.5" font-family="Liberation Sans" font-size="17" font-weight="700" fill="#8c8781" text-anchor="middle"  >P</text>
<text x="695" y="848" font-family="Liberation Sans" font-size="17" font-weight="700" fill="#8c8781" text-anchor="middle"  >P</text>
<g transform="translate(561,380.5)"><rect x="6" y="0" width="9" height="14" rx="1.5" fill="#9a9a9a" stroke="#fff" stroke-width="1"/><path d="M1.5,7 L10,7 M7,4 L10.5,7 L7,10" stroke="#fff" stroke-width="3" fill="none"/><path d="M1.5,7 L10,7 M7,4.3 L10,7 L7,9.7" stroke="#9a9a9a" stroke-width="1.6" fill="none"/></g>
<text x="582" y="393.5" font-family="Liberation Sans" font-size="15" font-weight="400" fill="#8e8e8e" text-anchor="start"  >1</text>
<g transform="translate(561,662)"><rect x="6" y="0" width="9" height="14" rx="1.5" fill="#9a9a9a" stroke="#fff" stroke-width="1"/><path d="M1.5,7 L10,7 M7,4 L10.5,7 L7,10" stroke="#fff" stroke-width="3" fill="none"/><path d="M1.5,7 L10,7 M7,4.3 L10,7 L7,9.7" stroke="#9a9a9a" stroke-width="1.6" fill="none"/></g>
<text x="582" y="675" font-family="Liberation Sans" font-size="15" font-weight="400" fill="#8e8e8e" text-anchor="start"  >1</text>
<g transform="translate(884,453)"><path d="M1.5,4 L12.5,4 L11,15 L3,15 Z" fill="#8c8781"/><path d="M2,3 Q7,-1 12,3" stroke="#8c8781" stroke-width="1.5" fill="none"/><path d="M5,1.5 L9,1.5" stroke="#8c8781" stroke-width="1.4"/></g>
<g transform="translate(0,-1.6)"><path d="M1249.3,410 A2.9,2.9 0 0 1 1255.1,410 L1255.1,418 L1256.2,418.6 L1256.2,421 L1248.2,421 L1248.2,418.6 L1249.3,418 Z" fill="#8c8781" stroke="#fff" stroke-width="0.9"/><circle cx="1252.2" cy="409.3" r="1.1" fill="#fff"/><path d="M1256,407 L1258.3,407 L1259.8,410.8 L1257.5,410.8 Z M1260,407 L1262.3,407 L1263.8,410.8 L1261.5,410.8 Z M1264.2,407 L1268.8,407 L1268.8,410.8 L1265.7,410.8 Z" fill="#8c8781"/></g>
<g><rect x="1256" y="427" width="9" height="14" rx="1" fill="#8c8781" stroke="#fff" stroke-width="0.9"/><circle cx="1254.3" cy="433.8" r="3.6" fill="#fff"/><circle cx="1254.3" cy="433.8" r="2.6" fill="#fff" stroke="#8c8781" stroke-width="1.1"/><path d="M1256.5,433.8 L1263,433.8 M1261,433.8 L1261,436 M1263,433.8 L1263,435.5" stroke="#fff" stroke-width="1.3"/></g>
<circle cx="933" cy="539" r="12" fill="#fff"/><circle cx="933" cy="539" r="11" fill="#a6a9ae"/><g transform="translate(933,539)"><rect x="-6.5" y="-4.5" width="13" height="9" fill="none" stroke="#fff" stroke-width="1.5"/><path d="M-6.5,-4.5 L0,1 L6.5,-4.5 M-6.5,4.5 L-2,0 M6.5,4.5 L2,0" stroke="#fff" stroke-width="1.3" fill="none"/></g>
<circle cx="1007" cy="525" r="12" fill="#fff"/><circle cx="1007" cy="525" r="11" fill="#4a9ff0"/><g transform="translate(1007,525)"><rect x="-5" y="-3.5" width="10" height="9" rx="1" fill="#fff"/><path d="M-2.5,-3.5 Q-2.5,-7 0,-7 Q2.5,-7 2.5,-3.5" stroke="#fff" stroke-width="1.3" fill="none"/><path d="M-2,-1.5 Q0,1.5 2,-1.5" stroke="#4a9ff0" stroke-width="1.2" fill="none"/></g>
<circle cx="887" cy="621" r="12" fill="#fff"/><circle cx="887" cy="621" r="11" fill="#4a9ff0"/><g transform="translate(887,621)"><path d="M-6.5,-1.5 L6.5,-1.5 L5,5 L-5,5 Z" fill="#fff"/><path d="M-4,-2 L-1,-6 M4,-2 L1,-6" stroke="#fff" stroke-width="1.4"/><path d="M-2.5,0 L-2.5,4 M0,0 L0,4 M2.5,0 L2.5,4" stroke="#4a9ff0" stroke-width="1"/></g>
<circle cx="763" cy="642" r="12" fill="#fff"/><circle cx="763" cy="642" r="11" fill="#ee87b4"/><g transform="translate(763,642)"><path d="M0,-6 Q-3,-2 0,4 Q3,-2 0,-6 Z M-2,3.5 Q-7,2 -6,-3 Q-4,2 -1,3 Z M2,3.5 Q7,2 6,-3 Q4,2 1,3 Z" fill="#fff"/></g>
<circle cx="965" cy="665" r="12" fill="#fff"/><circle cx="965" cy="665" r="11" fill="#f4908b"/><g transform="translate(965,665)"><path d="M0,-5.5 L0,5.5 M-5.5,0 L5.5,0" stroke="#fff" stroke-width="3.2"/></g>
<circle cx="954" cy="621" r="12" fill="#fff"/><circle cx="954" cy="621" r="11" fill="#a18ff6"/>
<text x="932.5" y="566.7" font-family="Liberation Sans" font-size="15.3" font-weight="400" fill="#6b6d70" text-anchor="middle" stroke="#fff" stroke-width="3" stroke-linejoin="round" paint-order="stroke" >Почта № 420025</text>
<text x="1023" y="532" font-family="Liberation Sans" font-size="16.5" font-weight="400" fill="#3b8fe3" text-anchor="start" stroke="#fff" stroke-width="3" stroke-linejoin="round" paint-order="stroke" >Wildberries</text>
<text x="970" y="625" font-family="Liberation Sans" font-size="16" font-weight="400" fill="#8372ec" text-anchor="start" stroke="#fff" stroke-width="3" stroke-linejoin="round" paint-order="stroke" >Мир Лте</text>
<text x="887.5" y="647.5" font-family="Liberation Sans" font-size="16" font-weight="400" fill="#3b8fe3" text-anchor="middle" stroke="#fff" stroke-width="3" stroke-linejoin="round" paint-order="stroke" >Амирхан</text>
<text x="824.5" y="657" font-family="Liberation Sans" font-size="16.8" font-weight="400" fill="#7a7876" text-anchor="middle" stroke="#fff" stroke-width="3" stroke-linejoin="round" paint-order="stroke" >182Б</text>
<text x="763" y="669.7" font-family="Liberation Sans" font-size="16" font-weight="400" fill="#d9609a" text-anchor="middle" stroke="#fff" stroke-width="3" stroke-linejoin="round" paint-order="stroke" >Bamil</text>
<text x="964.5" y="693" font-family="Liberation Sans" font-size="16" font-weight="400" fill="#e35d5b" text-anchor="middle" stroke="#fff" stroke-width="3" stroke-linejoin="round" paint-order="stroke" >Айболит</text>
<text x="864" y="847" font-family="Liberation Sans" font-size="16.8" font-weight="400" fill="#8a8886" text-anchor="middle"  >182А</text>
<text x="1043" y="827" font-family="Liberation Sans" font-size="17" font-weight="700" fill="#8c8781" text-anchor="middle"  >P</text>
<g transform="translate(954,601)"><path d="M0,29.8 C-1.5,24 -8.5,18 -14.1,13.5 A19.2,19.2 0 1 1 14.1,13.5 C8.5,18 1.5,24 0,29.8 Z" fill="#fff"/><path d="M0,26.8 C-1.5,21.5 -7,16 -12.3,12.5 A17.2,17.2 0 1 1 12.3,12.5 C7,16 1.5,21.5 0,26.8 Z" fill="#0a88ea"/><circle cx="0" cy="0.5" r="6.3" fill="#fff"/></g>
<defs><linearGradient id="mshadow" x1="0" y1="0" x2="0" y2="1"><stop offset="0" stop-color="#000" stop-opacity="0.065"/><stop offset="1" stop-color="#000" stop-opacity="0"/></linearGradient></defs><rect x="510" y="370" width="900" height="13" fill="url(#mshadow)"/>
<rect x="984" y="815.5" width="254" height="18" rx="3" fill="#fff" fill-opacity="0.75"/>
<text x="990" y="830" font-family="Liberation Sans" font-size="15.4" font-weight="400" fill="#000" text-anchor="start"  >© Яндекс <tspan text-decoration="underline">Условия использования</tspan></text>
<text x="1250" y="832" font-family="Liberation Sans" font-size="24.5" font-weight="700" fill="#4a4a4a" text-anchor="start"  textLength="149" lengthAdjust="spacingAndGlyphs"><tspan fill="#fc3f1d">Я</tspan>ндекс Карты</text></svg>
<div class="a" style="left:888px;top:275px;width:50px;height:100px;border-radius:8px;background:#fff;box-shadow:0 2px 8px rgba(0,0,0,0.12);overflow:hidden">
  <div class="a" style="left:0;top:0;width:50px;height:50px;background:#f2f1ee"></div>
  <svg class="a" style="left:13px;top:13px" width="24" height="24" viewBox="0 0 24 24"><path d="M12 2V23M1.5 12.5H22.5" stroke="#9c9c9c" stroke-width="1.6"/></svg>
  <svg class="a" style="left:13px;top:62px" width="24" height="24" viewBox="0 0 24 24"><path d="M2.5 12.5H21" stroke="#111" stroke-width="2"/></svg>
</div>
<div class="a" style="left:888px;top:390px;width:50px;height:50px;border-radius:8px;background:#fff;box-shadow:0 2px 8px rgba(0,0,0,0.12)"></div>
<svg class="a" style="left:898px;top:400px" width="30" height="30" viewBox="0 0 30 30"><path d="M3.5 13.5L24 5L15.5 25.5L13.2 15.8Z" fill="#000" stroke="#000" stroke-width="0.8" stroke-linejoin="round"/></svg>
<svg class="a" style="left:706px;top:354px" width="30" height="30" viewBox="0 0 30 30"><path d="M9 27.5L3.5 19.5Q1.5 17 3.3 16.2Q5 15.6 7.5 18.5V7.5Q7.5 5.5 9.2 5.5Q11 5.5 11 7.5V5Q11 3 12.8 3Q14.6 3 14.6 5V5.5Q14.6 3.6 16.4 3.6Q18.2 3.6 18.2 5.6V7.8Q18.2 6 20 6Q21.8 6 21.8 8V19Q21.8 23.5 19.5 25.5V27.5Z" fill="#e6f2fc" stroke="#000" stroke-width="1.7" stroke-linejoin="round"/><path d="M11 7V14M14.6 5.5V14M18.2 7.8V14.5" stroke="#000" stroke-width="1.3"/></svg>
  </div>
  <svg class="a" style="left:1471px;top:120px" width="22" height="22" viewBox="0 0 22 22"><path d="M2 2L20 20M20 2L2 20" stroke="#fff" stroke-width="2"/></svg>
</div>
<!-- TASKBAR -->
<div id="taskbar" class="a">

<div class="a" style="left:0;top:0;width:1920px;height:1px;background:#b6bec9"></div>
<svg class="a" style="left:806.5px;top:15.5px" width="30" height="30" viewBox="0 0 30 30"><defs><linearGradient id="wg" x1="0" y1="0" x2="1" y2="1"><stop offset="0" stop-color="#62d4ff"/><stop offset="1" stop-color="#0873d3"/></linearGradient><linearGradient id="wg2" x1="0" y1="0" x2="30" y2="30" gradientUnits="userSpaceOnUse"><stop offset="0" stop-color="#50c8fc"/><stop offset="1" stop-color="#0a6fcf"/></linearGradient></defs><path d="M0 2Q0 0 2 0H14.2V14.2H0Z" fill="url(#wg2)"/><path d="M15.8 0H28Q30 0 30 2V14.2H15.8Z" fill="url(#wg2)"/><path d="M0 15.8H14.2V30H2Q0 30 0 28Z" fill="url(#wg2)"/><path d="M15.8 15.8H30V28Q30 30 28 30H15.8Z" fill="url(#wg2)"/></svg>
<svg class="a" style="left:862px;top:16px" width="32" height="28" viewBox="0 0 32 28"><path d="M1 3Q1 1 3 1H11L14 4H29Q31 4 31 6V25Q31 27 29 27H3Q1 27 1 25Z" fill="#f5c048"/><path d="M1 7H31V25Q31 27 29 27H3Q1 27 1 25Z" fill="#fbd668"/><rect x="6" y="19" width="20" height="8" rx="2" fill="#1a86d9"/><rect x="10" y="21.5" width="12" height="1.3" fill="#0b4f8f"/></svg>
<div class="a" style="left:874px;top:50px;width:8px;height:3px;border-radius:2px;background:#8a8f96"></div>
<svg class="a" style="left:918px;top:15px" width="30" height="30" viewBox="0 0 30 30"><circle cx="15" cy="15" r="10" fill="none" stroke="#1fb24a" stroke-width="8.5"/><path d="M5 15A10 10 0 0 1 15 5" fill="none" stroke="#3d7ff5" stroke-width="8.5"/><path d="M15 25A10 10 0 0 1 5 15" fill="none" stroke="#f0302a" stroke-width="8.5"/><path d="M25 15A10 10 0 0 1 15 25" fill="none" stroke="#fcbf06" stroke-width="8.5"/><circle cx="15" cy="15" r="5" fill="#dfe7f4"/></svg>
<div class="a" style="left:929px;top:50px;width:8px;height:3px;border-radius:2px;background:#8a8f96"></div>
<svg class="a" style="left:973px;top:15px" width="30" height="30" viewBox="0 0 30 30"><rect width="30" height="30" fill="#262626"/><path d="M8.5 24L12 6H16.5L13 24Z M15.5 24L19 6H23.5L20 24Z M10.5 13H21.5L20.8 17H9.7Z" fill="#f2f2f2"/><path d="M5 27L19 3M11 27L25 3" stroke="#262626" stroke-width="1.1"/></svg>
<div class="a" style="left:984px;top:50px;width:8px;height:3px;border-radius:2px;background:#8a8f96"></div>
<svg class="a" style="left:1029px;top:16px" width="28" height="28" viewBox="0 0 28 28"><circle cx="14" cy="14" r="13.5" fill="#2f9fd8"/><path d="M6 13.5L21 7.5L18.5 20.5L13.5 17L11.5 19.5L11.7 15.5L18 10L9.8 14.8Z" fill="#fff"/></svg>
<div class="a" style="left:1045px;top:14px;width:20px;height:14px;border-radius:5px;background:#8c8c8c"></div>
<div class="t" style="left:1045px;top:15.5px;width:20px;text-align:center;font-size:10.5px;letter-spacing:-0.4px;color:#fff">..54</div>
<div class="a" style="left:1039px;top:50px;width:8px;height:3px;border-radius:2px;background:#8a8f96"></div>
<div class="a" style="left:1079px;top:6px;width:43px;height:48px;border-radius:5px;background:#e9eef7"></div>
<div class="a" style="left:1075px;top:6px;width:43px;height:48px;border-radius:5px;background:#f1f4fa;box-shadow:1px 0 0 #dde3ee"></div>
<svg class="a" style="left:1082px;top:15px" width="31" height="31" viewBox="0 0 31 31"><circle cx="15.5" cy="15.5" r="15" fill="#fff"/><path d="M8 7.5L15.5 16.5V25" stroke="#fc3f1d" stroke-width="3.4" fill="none"/><path d="M23.5 7.5L15.5 16.5" stroke="#ff5ec4" stroke-width="3.4" fill="none"/></svg>
<div class="a" style="left:1088px;top:50px;width:20px;height:3.5px;border-radius:2px;background:#1a73d9"></div>
<svg class="a" style="left:1626px;top:22px" width="16" height="14" viewBox="0 0 16 14"><path d="M2 10.5L8 4.5L14 10.5" fill="none" stroke="#222" stroke-width="1.4"/></svg>
<div class="t" style="left:1668px;top:24px;font-size:14.3px;color:#222;letter-spacing:-0.3px">РУС</div>
<svg class="a" style="left:1717px;top:20px" width="23" height="18" viewBox="0 0 23 18"><path d="M1.5 7Q11.5 -2 21.5 7M4.5 10Q11.5 4 18.5 10M7.5 13Q11.5 10 15.5 13" fill="none" stroke="#222" stroke-width="1.5"/><circle cx="11.5" cy="15.5" r="1.6" fill="#222"/></svg>
<svg class="a" style="left:1747px;top:21px" width="24" height="18" viewBox="0 0 24 18"><path d="M2 6H6L11 2V16L6 12H2Z" fill="none" stroke="#222" stroke-width="1.4" stroke-linejoin="round"/><path d="M14 6Q16 9 14 12" fill="none" stroke="#222" stroke-width="1.4"/><path d="M17 3.5Q21 9 17 14.5" fill="none" stroke="#999" stroke-width="1.3"/></svg>
<svg class="a" style="left:1777px;top:20px" width="28" height="18" viewBox="0 0 28 18"><rect x="1.5" y="4" width="22" height="12" rx="2.5" fill="none" stroke="#222" stroke-width="1.5"/><rect x="3.5" y="6" width="18" height="8" rx="1" fill="#16a316"/><rect x="24" y="8" width="2.2" height="4" rx="1" fill="#222"/><path d="M14 1L10.5 9H13.5L12 15" fill="none" stroke="#222" stroke-width="1.2"/></svg>
<div class="t" style="left:1860px;top:13px;font-size:14.2px;color:#1a1a1a">22:59</div>
<div class="t" style="left:1824px;top:33px;font-size:14.2px;color:#1a1a1a">02.04.2026</div>
</div>
</body></html>
